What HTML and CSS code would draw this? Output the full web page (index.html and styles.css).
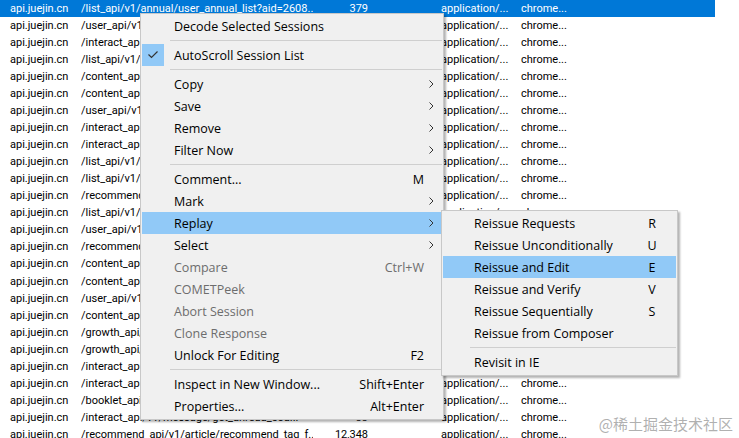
FILE: index.html
```html
<!DOCTYPE html>
<html lang="en">
<head>
    <meta charset="utf-8"/>
    <title>Sessions</title>
    <link rel="stylesheet" href="styles.css">
</head>
<body>
<div class="sessions">
    <div class="row selected"><span class="host">api.juejin.cn</span><span class="path">/list_api/v1/annual/user_annual_list?aid=2608...</span><span class="size">379</span><span class="type">application/...</span><span class="proc">chrome...</span></div>
    <div class="row"><span class="host">api.juejin.cn</span><span class="path">/user_api/v1/user/get?aid=2608&amp;uuid=6899...</span><span class="size">1,204</span><span class="type">application/...</span><span class="proc">chrome...</span></div>
    <div class="row"><span class="host">api.juejin.cn</span><span class="path">/interact_api/v1/digg/query_page?aid=2608...</span><span class="size">512</span><span class="type">application/...</span><span class="proc">chrome...</span></div>
    <div class="row"><span class="host">api.juejin.cn</span><span class="path">/list_api/v1/annual/list?aid=2608&amp;uuid=68...</span><span class="size">2,311</span><span class="type">application/...</span><span class="proc">chrome...</span></div>
    <div class="row"><span class="host">api.juejin.cn</span><span class="path">/content_api/v1/article/detail?aid=2608...</span><span class="size">8,140</span><span class="type">application/...</span><span class="proc">chrome...</span></div>
    <div class="row"><span class="host">api.juejin.cn</span><span class="path">/content_api/v1/article/query_list?aid=26...</span><span class="size">6,322</span><span class="type">application/...</span><span class="proc">chrome...</span></div>
    <div class="row"><span class="host">api.juejin.cn</span><span class="path">/user_api/v1/follow/count?aid=2608&amp;uuid...</span><span class="size">96</span><span class="type">application/...</span><span class="proc">chrome...</span></div>
    <div class="row"><span class="host">api.juejin.cn</span><span class="path">/interact_api/v1/collect/list?aid=2608...</span><span class="size">140</span><span class="type">application/...</span><span class="proc">chrome...</span></div>
    <div class="row"><span class="host">api.juejin.cn</span><span class="path">/interact_api/v1/comment/list?aid=2608...</span><span class="size">3,904</span><span class="type">application/...</span><span class="proc">chrome...</span></div>
    <div class="row"><span class="host">api.juejin.cn</span><span class="path">/list_api/v1/tag/list?aid=2608&amp;uuid=689...</span><span class="size">1,877</span><span class="type">application/...</span><span class="proc">chrome...</span></div>
    <div class="row"><span class="host">api.juejin.cn</span><span class="path">/list_api/v1/category/list?aid=2608...</span><span class="size">1,025</span><span class="type">application/...</span><span class="proc">chrome...</span></div>
    <div class="row"><span class="host">api.juejin.cn</span><span class="path">/recommend_api/v1/article/recommend_all...</span><span class="size">24,560</span><span class="type">application/...</span><span class="proc">chrome...</span></div>
    <div class="row"><span class="host">api.juejin.cn</span><span class="path">/list_api/v1/annual/info?aid=2608&amp;uuid...</span><span class="size">418</span><span class="type">application/...</span><span class="proc">chrome...</span></div>
    <div class="row"><span class="host">api.juejin.cn</span><span class="path">/user_api/v1/author/recommend?aid=2608...</span><span class="size">2,730</span><span class="type">application/...</span><span class="proc">chrome...</span></div>
    <div class="row"><span class="host">api.juejin.cn</span><span class="path">/recommend_api/v1/short_msg/hot?aid=26...</span><span class="size">9,016</span><span class="type">application/...</span><span class="proc">chrome...</span></div>
    <div class="row"><span class="host">api.juejin.cn</span><span class="path">/content_api/v1/short_msg/detail?aid=26...</span><span class="size">1,336</span><span class="type">application/...</span><span class="proc">chrome...</span></div>
    <div class="row"><span class="host">api.juejin.cn</span><span class="path">/content_api/v1/column/detail?aid=2608...</span><span class="size">870</span><span class="type">application/...</span><span class="proc">chrome...</span></div>
    <div class="row"><span class="host">api.juejin.cn</span><span class="path">/user_api/v1/user/dynamic?aid=2608...</span><span class="size">5,402</span><span class="type">application/...</span><span class="proc">chrome...</span></div>
    <div class="row"><span class="host">api.juejin.cn</span><span class="path">/content_api/v1/tag/detail?aid=2608...</span><span class="size">655</span><span class="type">application/...</span><span class="proc">chrome...</span></div>
    <div class="row"><span class="host">api.juejin.cn</span><span class="path">/growth_api/v1/get_cur_point?aid=2608...</span><span class="size">88</span><span class="type">application/...</span><span class="proc">chrome...</span></div>
    <div class="row"><span class="host">api.juejin.cn</span><span class="path">/growth_api/v1/get_today_status?aid=26...</span><span class="size">71</span><span class="type">application/...</span><span class="proc">chrome...</span></div>
    <div class="row"><span class="host">api.juejin.cn</span><span class="path">/interact_api/v1/message/count?aid=2608...</span><span class="size">154</span><span class="type">application/...</span><span class="proc">chrome...</span></div>
    <div class="row"><span class="host">api.juejin.cn</span><span class="path">/interact_api/v1/pin/list?aid=2608...</span><span class="size">3,118</span><span class="type">application/...</span><span class="proc">chrome...</span></div>
    <div class="row"><span class="host">api.juejin.cn</span><span class="path">/booklet_api/v1/booklet/listbycategory...</span><span class="size">11,920</span><span class="type">application/...</span><span class="proc">chrome...</span></div>
    <div class="row"><span class="host">api.juejin.cn</span><span class="path">/interact_api/v1/message/get_unread_cou...</span><span class="size">33</span><span class="type">application/...</span><span class="proc">chrome...</span></div>
    <div class="row"><span class="host">api.juejin.cn</span><span class="path">/recommend_api/v1/article/recommend_tag_f...</span><span class="size">12,348</span><span class="type">application/...</span><span class="proc">chrome...</span></div>
</div>

<!-- context menu -->
<div class="menu main-menu">
    <div class="item"><span class="icon"></span><span class="label">Decode Selected Sessions</span><span class="key"></span><span class="sub"></span></div>
    <div class="sep"></div>
    <div class="item"><span class="icon checked"><svg width="10" height="8" viewBox="0 0 10 8"><polyline points="0.5,3.5 3.5,6.5 9.5,0.5" fill="none" stroke="#333" stroke-width="1.2"/></svg></span><span class="label">AutoScroll Session List</span><span class="key"></span><span class="sub"></span></div>
    <div class="sep"></div>
    <div class="item"><span class="icon"></span><span class="label">Copy</span><span class="key"></span><span class="sub"><svg width="5" height="8" viewBox="0 0 5 8"><polyline points="0.5,0.5 4,4 0.5,7.5" fill="none" stroke="#333" stroke-width="1"/></svg></span></div>
    <div class="item"><span class="icon"></span><span class="label">Save</span><span class="key"></span><span class="sub"><svg width="5" height="8" viewBox="0 0 5 8"><polyline points="0.5,0.5 4,4 0.5,7.5" fill="none" stroke="#333" stroke-width="1"/></svg></span></div>
    <div class="item"><span class="icon"></span><span class="label">Remove</span><span class="key"></span><span class="sub"><svg width="5" height="8" viewBox="0 0 5 8"><polyline points="0.5,0.5 4,4 0.5,7.5" fill="none" stroke="#333" stroke-width="1"/></svg></span></div>
    <div class="item"><span class="icon"></span><span class="label">Filter Now</span><span class="key"></span><span class="sub"><svg width="5" height="8" viewBox="0 0 5 8"><polyline points="0.5,0.5 4,4 0.5,7.5" fill="none" stroke="#333" stroke-width="1"/></svg></span></div>
    <div class="sep"></div>
    <div class="item"><span class="icon"></span><span class="label">Comment...</span><span class="key">M</span><span class="sub"></span></div>
    <div class="item"><span class="icon"></span><span class="label">Mark</span><span class="key"></span><span class="sub"><svg width="5" height="8" viewBox="0 0 5 8"><polyline points="0.5,0.5 4,4 0.5,7.5" fill="none" stroke="#333" stroke-width="1"/></svg></span></div>
    <div class="item active"><span class="icon"></span><span class="label">Replay</span><span class="key"></span><span class="sub"><svg width="5" height="8" viewBox="0 0 5 8"><polyline points="0.5,0.5 4,4 0.5,7.5" fill="none" stroke="#333" stroke-width="1"/></svg></span></div>
    <div class="item"><span class="icon"></span><span class="label">Select</span><span class="key"></span><span class="sub"><svg width="5" height="8" viewBox="0 0 5 8"><polyline points="0.5,0.5 4,4 0.5,7.5" fill="none" stroke="#333" stroke-width="1"/></svg></span></div>
    <div class="item disabled"><span class="icon"></span><span class="label">Compare</span><span class="key">Ctrl+W</span><span class="sub"></span></div>
    <div class="item disabled"><span class="icon"></span><span class="label">COMETPeek</span><span class="key"></span><span class="sub"></span></div>
    <div class="item disabled"><span class="icon"></span><span class="label">Abort Session</span><span class="key"></span><span class="sub"></span></div>
    <div class="item disabled"><span class="icon"></span><span class="label">Clone Response</span><span class="key"></span><span class="sub"></span></div>
    <div class="item"><span class="icon"></span><span class="label">Unlock For Editing</span><span class="key">F2</span><span class="sub"></span></div>
    <div class="sep"></div>
    <div class="item"><span class="icon"></span><span class="label">Inspect in New Window...</span><span class="key">Shift+Enter</span><span class="sub"></span></div>
    <div class="item"><span class="icon"></span><span class="label">Properties...</span><span class="key">Alt+Enter</span><span class="sub"></span></div>
</div>

<!-- Replay submenu -->
<div class="menu replay-menu">
    <div class="item"><span class="label">Reissue Requests</span><span class="key">R</span></div>
    <div class="item"><span class="label">Reissue Unconditionally</span><span class="key">U</span></div>
    <div class="item active"><span class="label">Reissue and Edit</span><span class="key">E</span></div>
    <div class="item"><span class="label">Reissue and Verify</span><span class="key">V</span></div>
    <div class="item"><span class="label">Reissue Sequentially</span><span class="key">S</span></div>
    <div class="item"><span class="label">Reissue from Composer</span><span class="key"></span></div>
    <div class="sep"></div>
    <div class="item"><span class="label">Revisit in IE</span><span class="key"></span></div>
</div>

<div class="watermark">@稀土掘金技术社区</div>
</body>
</html>
```

FILE: styles.css
```css
* {
    margin: 0;
    padding: 0;
    box-sizing: border-box;
}

body {
    position: relative;
    width: 739px;
    height: 438px;
    overflow: hidden;
    background: #fff;
    font-family: "Roboto", "Open Sans", sans-serif;
    font-size: 11px;
    color: #000;
}

/* session list */
.row {
    display: flex;
    width: 715px;
    height: 17.04px;
    line-height: 18px;
    padding-left: 10px;
    white-space: nowrap;
}

.row.selected {
    background: #0078d7;
    color: #fff;
}

.host {
    width: 71px;
}

.path {
    width: 232px;
    overflow: hidden;
}

.size {
    width: 55px;
    text-align: right;
}

.type {
    width: 80px;
    margin-left: 73px;
}

/* menus */
.menu {
    position: absolute;
    background: #f0f0f0;
    border: 1px solid #c8c8c8;
    padding: 1px 1px 2px;
    box-shadow: 2px 2px 2px rgba(0, 0, 0, 0.3);
    font-family: "Open Sans", sans-serif;
    font-size: 12.5px;
    color: #000;
}

.main-menu {
    left: 140px;
    top: 13px;
    width: 304px;
}

.replay-menu {
    left: 441px;
    top: 210px;
    width: 237px;
}

.item {
    display: flex;
    align-items: center;
    height: 22px;
    white-space: nowrap;
}

.item.active {
    background: #91c9f7;
}

.item.disabled {
    color: #6d6d6d;
}

.icon {
    width: 22px;
    height: 22px;
    margin-right: 10px;
    display: flex;
    align-items: center;
    justify-content: center;
}

.icon.checked {
    background: #91c9f7;
}

.label {
    flex: 1;
}

.main-menu .sub {
    width: 18px;
    display: flex;
    align-items: center;
    padding-left: 5px;
}

.main-menu .key {
    text-align: right;
}

.replay-menu .item {
    padding-left: 31px;
    padding-right: 18px;
}

.replay-menu .key {
    width: 12px;
    text-align: center;
}

.sep {
    height: 7px;
    margin-left: 28px;
    padding-top: 3px;
}

.sep::after {
    content: "";
    display: block;
    height: 1px;
    background: #cfcfcf;
}

.replay-menu .sep {
    margin-left: 27px;
}

.watermark {
    position: absolute;
    right: 6px;
    bottom: 4px;
    font-family: "Noto Sans CJK SC", sans-serif;
    font-size: 15px;
    color: rgba(150, 150, 150, 0.75);
}
```
